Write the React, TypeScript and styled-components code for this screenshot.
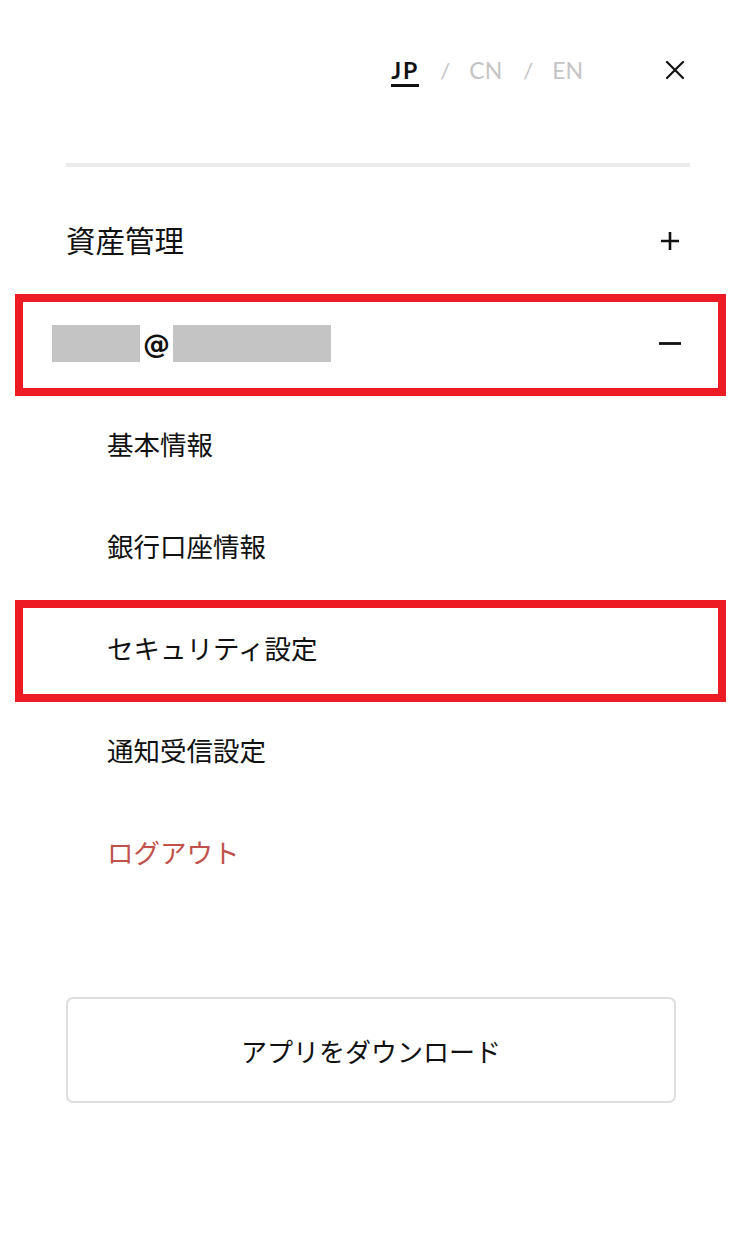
import styled, { createGlobalStyle } from 'styled-components';

const GlobalStyle = createGlobalStyle`
  body {
    margin: 0;
    background: #fff;
    color: #111;
    font-family: "Noto Sans CJK JP", "Noto Sans", sans-serif;
  }
`;

const langs = ['JP', 'CN', 'EN'];

const subItems = [
  { label: '基本情報' },
  { label: '銀行口座情報' },
  { label: 'セキュリティ設定', marked: true },
  { label: '通知受信設定' },
  { label: 'ログアウト', danger: true },
];

export default function App() {
  return (
    <>
      <GlobalStyle />
      <Drawer>
        <Header>
          <LangSwitch>
            {langs.map((l, i) => (
              <LangGroup key={l}>
                {i > 0 && <Slash>/</Slash>}
                <Lang $active={i === 0}>{l}</Lang>
              </LangGroup>
            ))}
          </LangSwitch>
          <CloseButton aria-label="close">
            <svg width="24" height="24" viewBox="0 0 24 24">
              <path d="M4 4 L20 20 M20 4 L4 20" stroke="#111" strokeWidth="2.2" strokeLinecap="round" />
            </svg>
          </CloseButton>
        </Header>

        <Divider />

        <Menu>
          <Row>
            <TopLabel>資産管理</TopLabel>
            <Toggle>
              <svg width="22" height="22" viewBox="0 0 22 22">
                <path d="M11 2 V20 M2 11 H20" stroke="#111" strokeWidth="2.6" />
              </svg>
            </Toggle>
          </Row>
          <Row $marked>
            <Email>
              <Mask $w={88} />
              <At>@</At>
              <Mask $w={158} />
            </Email>
            <Toggle>
              <svg width="22" height="22" viewBox="0 0 22 22">
                <path d="M0 11.5 H22" stroke="#111" strokeWidth="2.8" />
              </svg>
            </Toggle>
          </Row>
          {subItems.map((item) => (
            <Row key={item.label} $marked={item.marked}>
              <SubLabel $danger={item.danger}>{item.label}</SubLabel>
            </Row>
          ))}
        </Menu>

        <DownloadButton>アプリをダウンロード</DownloadButton>
      </Drawer>
    </>
  );
}

const Drawer = styled.div`
  width: 738px;
  min-height: 1240px;
  box-sizing: border-box;
  padding: 50px 48px 0 66px;
`;

const Header = styled.div`
  display: flex;
  align-items: center;
  justify-content: flex-end;
  height: 40px;
`;

const LangSwitch = styled.div`
  display: flex;
  align-items: center;
  margin-right: 80px;
`;

const LangGroup = styled.div`
  display: flex;
  align-items: center;
`;

const Slash = styled.span`
  font-family: "Lato", "Noto Sans", sans-serif;
  font-size: 22px;
  color: #c4c4c4;
  margin: 0 19px 0 21px;
`;

const Lang = styled.span<{ $active?: boolean }>`
  position: relative;
  font-family: "Lato", "Noto Sans", sans-serif;
  font-size: 23px;
  font-weight: ${(p) => (p.$active ? 700 : 400)};
  letter-spacing: ${(p) => (p.$active ? '2px' : '0')};
  color: ${(p) => (p.$active ? '#111' : '#c4c4c4')};
  line-height: 40px;

  &::after {
    content: '';
    display: ${(p) => (p.$active ? 'block' : 'none')};
    position: absolute;
    left: 0;
    right: 0;
    bottom: 3px;
    height: 3px;
    background: #111;
  }
`;

const CloseButton = styled.button`
  border: 0;
  background: none;
  padding: 0;
  width: 24px;
  height: 24px;
  display: flex;
  margin-right: 3px;
`;

const Divider = styled.div`
  height: 4px;
  background: #ebebeb;
  margin-top: 73px;
  margin-bottom: 23px;
`;

const Menu = styled.div`
  display: flex;
  flex-direction: column;
`;

const Row = styled.div<{ $marked?: boolean }>`
  position: relative;
  height: 102px;
  display: flex;
  align-items: center;
  justify-content: space-between;

  &::after {
    content: '';
    display: ${(p) => (p.$marked ? 'block' : 'none')};
    position: absolute;
    top: 2px;
    bottom: -2px;
    left: -51px;
    right: -36px;
    border: 8px solid #ed1c24;
    pointer-events: none;
  }
`;

const TopLabel = styled.span`
  font-size: 29.5px;
  color: #111;
  margin-top: -4px;
`;

const SubLabel = styled.span<{ $danger?: boolean }>`
  font-size: 26.5px;
  padding-left: 41px;
  margin-top: -3px;
  color: ${(p) => (p.$danger ? '#c0524b' : '#111')};
`;

const Toggle = styled.span`
  display: flex;
  margin-right: 9px;
`;

const Email = styled.div`
  display: flex;
  align-items: center;
  margin-left: -14px;
`;

const Mask = styled.span<{ $w: number }>`
  display: block;
  width: ${(p) => p.$w}px;
  height: 37px;
  background: #c4c4c4;
`;

const At = styled.span`
  font-family: "DejaVu Sans", "Liberation Sans", sans-serif;
  font-weight: 700;
  font-size: 27px;
  margin: 0 3px;
`;

const DownloadButton = styled.button`
  display: block;
  width: 610px;
  height: 106px;
  margin-top: 93px;
  border: 2px solid #dedede;
  border-radius: 7px;
  background: #fff;
  font-family: "Noto Sans CJK JP", "Noto Sans", sans-serif;
  font-size: 26px;
  color: #111;
  cursor: pointer;
`;
